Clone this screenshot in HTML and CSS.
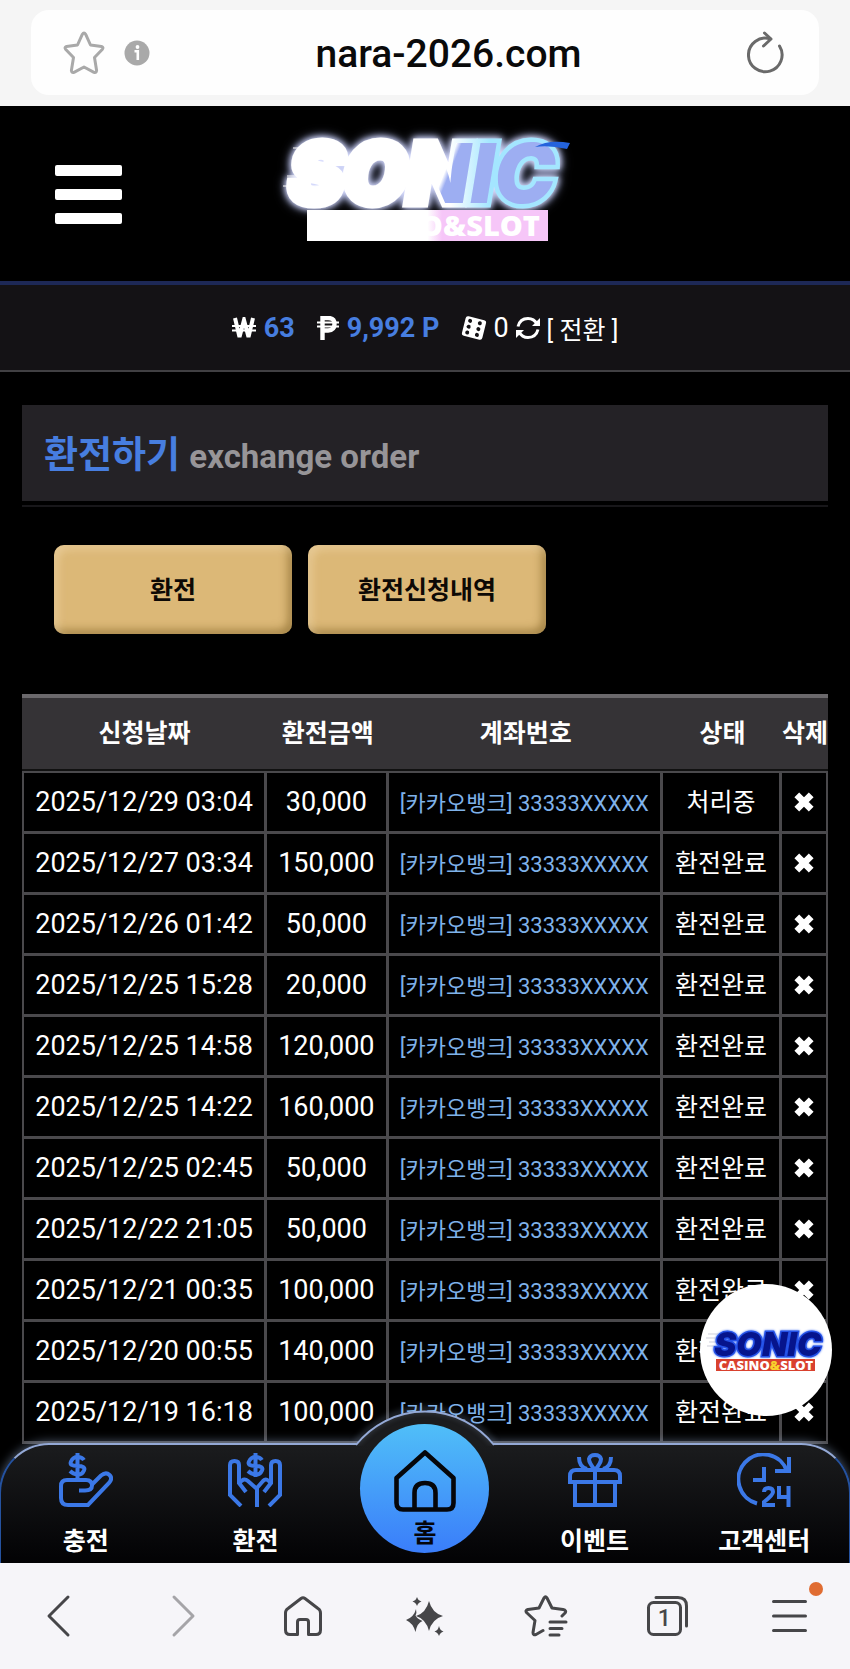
FILE: index.html
```html
<!DOCTYPE html>
<html lang="ko">
<head>
    <meta charset="UTF-8">
    <meta name="viewport" content="width=device-width, initial-scale=1.0">
    <title>환전하기</title>
    <link rel="stylesheet" href="styles.css">
</head>
<body>
    <svg class="sprite" aria-hidden="true">
        <symbol id="icon-x" viewBox="0 0 20 20">
            <path d="M4 4 L16 16 M16 4 L4 16" fill="none" stroke="currentColor" stroke-width="5.600"/>
        </symbol>
    </svg>

    <div class="browser">
        <div class="address-bar">
            <div class="address">
                <button class="icon-btn" aria-label="Bookmark">
                    <svg width="42" height="44" viewBox="0 0 42 44" fill="none" stroke="#a9a9a9" stroke-width="3" stroke-linejoin="round"><path d="M19.4 3.2Q21 .6 22.600 3.200L27.500 14L38.500 15.400Q41 16.300 39.200 18.500L31.500 26.500L33.600 39.500Q33.400 42.200 31 41.300L21 36L11 41.300Q8.600 42.200 8.400 39.500L10.500 26.500L2.800 18.500Q1 16.300 3.500 15.400L14.500 14Z"/></svg>
                </button>
                <button class="icon-btn" aria-label="Site info">
                    <svg width="26" height="26" viewBox="0 0 26 26"><circle cx="13" cy="13" r="12.500" fill="#a9a9a9"/><circle cx="13.500" cy="7" r="1.900" fill="#fff"/><path d="M10.500 11.200H13.800V20" fill="none" stroke="#fff" stroke-width="2.600"/></svg>
                </button>
                <span class="url">nara-2026.com</span>
                <button class="icon-btn" aria-label="Reload">
                    <svg width="38" height="44" viewBox="0 0 38 44" fill="none" stroke="#6a6a6a" stroke-width="3" stroke-linecap="round" stroke-linejoin="round"><path d="M32.500 15A16.800 16.800 0 1 1 23 7.800"/><path d="M17.500 2L24 8L16.500 15"/></svg>
                </button>
            </div>
        </div>

        <div class="site">
            <div class="site-scroll">
                <header class="site-header">
                    <button class="menu-btn" aria-label="메뉴"><span></span><span></span><span></span></button>
                    <a class="logo" href="#" aria-label="SONIC CASINO&amp;SLOT">
                        <svg width="320" height="128" viewBox="-10 -10 320 128">
                            <defs>
                                <linearGradient id="shine" x1="0" x2="1" y1="0" y2="0.150">
                                    <stop offset="0.640" stop-color="#fff"/>
                                    <stop offset="0.660" stop-color="#9daef2"/>
                                </linearGradient>
                                <linearGradient id="glow" x1="0" x2="1">
                                    <stop offset="0.600" stop-color="#fff"/>
                                    <stop offset="0.750" stop-color="#a4e6ff"/>
                                </linearGradient>
                                <linearGradient id="strip" x1="0" x2="1">
                                    <stop offset="0.500" stop-color="#fff"/>
                                    <stop offset="0.560" stop-color="#f6c6f8"/>
                                </linearGradient>
                            </defs>
                            <text class="logo-word glow" x="6" y="75" font-size="82" fill="url(#shine)" stroke="url(#glow)" stroke-width="9">SONIC</text>
                            <path d="M10 20H60M4 48H40M0 58H36" stroke="#fff" stroke-width="1"/>
                            <path d="M252 19Q266 11 287 15L284 21Q266 17 252 19Z" fill="#2463dc"/>
                            <rect x="24" y="82" width="241" height="31" fill="url(#strip)"/>
                            <text class="logo-tag" x="257" y="108" font-size="29" fill="#fff" text-anchor="end">CASINO&amp;SLOT</text>
                        </svg>
                    </a>
                </header>

                <div class="balance">
                    <span class="balance-item">
                        <svg width="24" height="22" viewBox="0 0 24 22" fill="none" stroke="#fff"><path d="M3 1L7.500 20L12 3L16.500 20L21 1" stroke-width="4"/><path d="M0 9H24M0 13.500H24" stroke-width="1.800"/></svg>
                        <b>63</b>
                    </span>
                    <span class="balance-item">
                        <svg width="22" height="24" viewBox="0 0 22 24" fill="none" stroke="#fff"><path d="M5.500 24V2H11Q17.500 2 17.500 8T11 14.500H5" stroke-width="4.400"/><path d="M0 6.500H22M0 10.500H22" stroke-width="2"/></svg>
                        <b>9,992 P</b>
                    </span>
                    <span class="balance-item casino">
                        <svg width="26" height="26" viewBox="0 0 26 26"><g transform="rotate(14 13 13)"><rect x="2.500" y="3" width="21" height="20" rx="2.500" fill="#fff"/><g fill="#141215"><circle cx="7.500" cy="7" r="2"/><circle cx="7.500" cy="13" r="2"/><circle cx="7.500" cy="19" r="2"/><circle cx="17.500" cy="7" r="2"/><circle cx="17.500" cy="13" r="2"/><circle cx="17.500" cy="19" r="2"/></g></g></svg>
                        <span>0</span>
                        <button class="swap-btn">
                            <svg width="26" height="26" viewBox="0 0 26 26" fill="none" stroke="#fff" stroke-width="3"><path d="M3 11.500Q5 3.500 13 3.500Q19 3.500 22 9M23 14.500Q21 22.500 13 22.500Q7 22.500 4 17"/><path d="M25 3V11H17ZM1 23V15H9Z" fill="#fff" stroke="none"/></svg>
                            <span>[ 전환 ]</span>
                        </button>
                    </span>
                </div>

                <main class="content">
                    <div class="title-wrap">
                        <h1 class="title">환전하기 <small>exchange order</small></h1>
                    </div>

                    <div class="tabs">
                        <button class="gold-btn">환전</button>
                        <button class="gold-btn">환전신청내역</button>
                    </div>

                    <table class="orders">
                        <colgroup>
                            <col class="col-date">
                            <col class="col-amount">
                            <col class="col-account">
                            <col class="col-status">
                            <col class="col-delete">
                        </colgroup>
                        <thead>
                            <tr><th>신청날짜</th><th>환전금액</th><th>계좌번호</th><th>상태</th><th>삭제</th></tr>
                        </thead>
                        <tbody>
                            <tr>
                                <td>2025/12/29 03:04</td><td>30,000</td><td class="account">[카카오뱅크] 33333XXXXX</td><td class="status">처리중</td>
                                <td><button class="delete-btn" aria-label="삭제"><svg width="24" height="24"><use href="#icon-x"/></svg></button></td>
                            </tr>
                            <tr>
                                <td>2025/12/27 03:34</td><td>150,000</td><td class="account">[카카오뱅크] 33333XXXXX</td><td class="status">환전완료</td>
                                <td><button class="delete-btn" aria-label="삭제"><svg width="24" height="24"><use href="#icon-x"/></svg></button></td>
                            </tr>
                            <tr>
                                <td>2025/12/26 01:42</td><td>50,000</td><td class="account">[카카오뱅크] 33333XXXXX</td><td class="status">환전완료</td>
                                <td><button class="delete-btn" aria-label="삭제"><svg width="24" height="24"><use href="#icon-x"/></svg></button></td>
                            </tr>
                            <tr>
                                <td>2025/12/25 15:28</td><td>20,000</td><td class="account">[카카오뱅크] 33333XXXXX</td><td class="status">환전완료</td>
                                <td><button class="delete-btn" aria-label="삭제"><svg width="24" height="24"><use href="#icon-x"/></svg></button></td>
                            </tr>
                            <tr>
                                <td>2025/12/25 14:58</td><td>120,000</td><td class="account">[카카오뱅크] 33333XXXXX</td><td class="status">환전완료</td>
                                <td><button class="delete-btn" aria-label="삭제"><svg width="24" height="24"><use href="#icon-x"/></svg></button></td>
                            </tr>
                            <tr>
                                <td>2025/12/25 14:22</td><td>160,000</td><td class="account">[카카오뱅크] 33333XXXXX</td><td class="status">환전완료</td>
                                <td><button class="delete-btn" aria-label="삭제"><svg width="24" height="24"><use href="#icon-x"/></svg></button></td>
                            </tr>
                            <tr>
                                <td>2025/12/25 02:45</td><td>50,000</td><td class="account">[카카오뱅크] 33333XXXXX</td><td class="status">환전완료</td>
                                <td><button class="delete-btn" aria-label="삭제"><svg width="24" height="24"><use href="#icon-x"/></svg></button></td>
                            </tr>
                            <tr>
                                <td>2025/12/22 21:05</td><td>50,000</td><td class="account">[카카오뱅크] 33333XXXXX</td><td class="status">환전완료</td>
                                <td><button class="delete-btn" aria-label="삭제"><svg width="24" height="24"><use href="#icon-x"/></svg></button></td>
                            </tr>
                            <tr>
                                <td>2025/12/21 00:35</td><td>100,000</td><td class="account">[카카오뱅크] 33333XXXXX</td><td class="status">환전완료</td>
                                <td><button class="delete-btn" aria-label="삭제"><svg width="24" height="24"><use href="#icon-x"/></svg></button></td>
                            </tr>
                            <tr>
                                <td>2025/12/20 00:55</td><td>140,000</td><td class="account">[카카오뱅크] 33333XXXXX</td><td class="status">환전완료</td>
                                <td><button class="delete-btn" aria-label="삭제"><svg width="24" height="24"><use href="#icon-x"/></svg></button></td>
                            </tr>
                            <tr>
                                <td>2025/12/19 16:18</td><td>100,000</td><td class="account">[카카오뱅크] 33333XXXXX</td><td class="status">환전완료</td>
                                <td><button class="delete-btn" aria-label="삭제"><svg width="24" height="24"><use href="#icon-x"/></svg></button></td>
                            </tr>
                        </tbody>
                    </table>
                </main>
            </div>

            <a class="float-badge" href="#" aria-label="SONIC CASINO&amp;SLOT">
                <svg width="132" height="132" viewBox="0 0 132 132">
                    <path d="M8 50H34M6 54H32M9 58H30M7 62H28" stroke="#b9bccb" stroke-width="0.700"/>
                    <text class="logo-word halo" x="68" y="72" font-size="33" text-anchor="middle" fill="#06148c" stroke="#2350e6" stroke-width="3">SONIC</text>
                    <rect x="16" y="75" width="99" height="12" fill="#d9412e"/>
                    <text class="logo-tag" x="66" y="86" font-size="13" text-anchor="middle" fill="#fff">CASINO<tspan fill="#f8d32c">&amp;</tspan>SLOT</text>
                </svg>
            </a>

            <nav class="bottom-nav">
                <svg class="nav-bump" width="160" height="46" viewBox="0 -8 160 46" aria-hidden="true">
                    <path d="M12 36A88 88 0 0 1 148 36V38H12Z" fill="#1b1c1e"/>
                    <path class="bump-line" d="M11 37A88 88 0 0 1 149 37" fill="none" stroke="#94a9d6" stroke-width="2"/>
                </svg>
                <a href="#">
                    <svg width="54" height="54" viewBox="0 0 54 54" fill="none" stroke="#3b78e7" stroke-width="4"><path d="M25 7Q23 4 18.500 4T12 8.500T18.500 13T25 17.500T18.500 21.500T11 18M18.500 0V26" /><path d="M20 37.500H26Q33 37.500 33 32.500Q33 27 27 27H8Q2 27 2 33V45Q2 52 9 52H29L50 30Q54 25.500 50.500 22T42 22.500L33 31.500"/></svg>
                    <span>충전</span>
                </a>
                <a href="#">
                    <svg width="54" height="54" viewBox="0 0 54 54" fill="none" stroke="#3b78e7" stroke-width="4"><path d="M34 7Q32 4 27.500 4T21 8.500T27.500 13T34 17.500T27.500 21.500T20 18M27.500 0V24"/><path d="M13 53L2 42V12Q2 8 6.500 8T11 12V30L18 39M11 31Q15 24 20 28L29 36V54M41 53L52 42V12Q52 8 47.500 8T43 12V30L36 39M43 31Q39 24 35 28L28 36"/></svg>
                    <span>환전</span>
                </a>
                <a class="home" href="#">
                    <svg width="62" height="62" viewBox="0 0 62 62" fill="none" stroke="#05060a" stroke-width="4.600" stroke-linejoin="round"><path d="M2.500 28L31 2.500L59.500 28V53Q59.500 59.500 53 59.500H9Q2.500 59.500 2.500 53ZM20.500 59V43Q20.500 33 31 33T41.500 43V59"/></svg>
                    <span>홈</span>
                </a>
                <a href="#">
                    <svg width="54" height="54" viewBox="0 0 54 54" fill="none" stroke="#3b78e7" stroke-width="4"><path d="M7 30V52H47V30M27 17V52M2 29V23Q2 17 8 17H46Q52 17 52 23V29ZM27 17Q21 10 21 6Q22 2 27 2T33 6Q33 10 27 17M19 16Q11 14 11 4M35 16Q43 14 43 4"/></svg>
                    <span>이벤트</span>
                </a>
                <a href="#">
                    <svg width="54" height="54" viewBox="0 0 54 54" fill="none" stroke="#3b78e7" stroke-width="4"><path d="M20 50.500A25 25 0 1 1 50 18M52 4V18H38M27 14V27H16"/><path d="M27 39Q27 35 31.500 35T36 39Q36 42 27 49V52H38M42 33V44H52M51.500 33V54"/></svg>
                    <span>고객센터</span>
                </a>
            </nav>
        </div>

        <div class="toolbar">
            <button class="icon-btn" aria-label="Back"><svg width="44" height="44" viewBox="0 0 44 44"><path d="M29 3L10 22L29 41"/></svg></button>
            <button class="icon-btn dim" aria-label="Forward"><svg width="44" height="44" viewBox="0 0 44 44"><path d="M14 3L33 22L14 41"/></svg></button>
            <button class="icon-btn" aria-label="Home"><svg width="44" height="44" viewBox="0 0 44 44"><path d="M19 4.500Q21 3 23 4.500L36 14.500Q38.500 16 38.500 19V36Q38.500 40.500 34 40.500H26.500V28Q26.500 25.500 24 25.500H18Q15.500 25.500 15.500 28V40.500H8Q3.500 40.500 3.500 36V19Q3.500 16 6 14.500Z"/></svg></button>
            <button class="icon-btn" aria-label="Assistant"><svg width="44" height="44" viewBox="0 0 44 44"><g fill="#464649" stroke="none"><path d="M26 7Q29 19 40 22Q29 25 26 37Q23 25 13 22Q23 19 26 7Z"/><path d="M13 15Q14 19 12.500 21.500Q14 24.500 19.500 27Q14 29 12.500 38Q10 29 3 26Q11 23 13 15Z"/><path d="M14 3Q15 6.500 18.500 7.500Q15 8.500 14 12Q13 8.500 9.500 7.500Q13 6.500 14 3Z"/><path d="M36 32Q37 36.500 40.500 37.500Q37 38.500 36 42Q35 38.500 31.500 37.500Q35 36.500 36 32Z"/></g></svg></button>
            <button class="icon-btn" aria-label="Bookmarks"><svg width="44" height="44" viewBox="0 0 44 44"><path d="M19 36.500L12 40.500Q9 41.500 9 38.500L11 26.500L2.500 18.500Q1 16.500 4 15.500L15 14L20 4Q21.500 1.500 23 4L28 14L39 15.500Q43 16.500 41 19L38 22M26 28H42M26 34.500H38M26 41H35"/></svg></button>
            <button class="icon-btn tab-count" aria-label="Tabs"><svg width="44" height="44" viewBox="0 0 44 44"><rect x="2.500" y="8.500" width="32" height="32" rx="5"/><path d="M10 3.500H32Q40.500 3.500 40.500 12V32"/></svg><span>1</span></button>
            <button class="icon-btn alert" aria-label="Menu"><svg width="44" height="44" viewBox="0 0 44 44"><path d="M6.500 7.500H38.500M6.500 22H38.500M6.500 36.500H38.500"/></svg></button>
        </div>
    </div>
</body>
</html>
```

FILE: styles.css
```css
:root {
    --blue: #477ee0;
    --gold: #dcb877;
    --line: #4a494c;
}

* {
    margin: 0;
    padding: 0;
    box-sizing: border-box;
}

body {
    font-family: Roboto, "Noto Sans CJK KR", sans-serif;
    background-color: #000;
    color: #fff;
}

button {
    background: none;
    border: none;
    color: inherit;
    font-family: inherit;
    cursor: pointer;
}

a {
    color: inherit;
    text-decoration: none;
}

svg {
    display: block;
    flex-shrink: 0;
}

.sprite {
    position: absolute;
    width: 0;
    height: 0;
}

.browser {
    display: flex;
    flex-direction: column;
    height: 100vh;
}

/* address bar */
.address-bar {
    background-color: #f5f5f5;
    padding: 10px 31px 11px;
}

.address {
    display: flex;
    align-items: center;
    height: 85px;
    padding: 0 34px 0 32px;
    background-color: #fefefe;
    border-radius: 18px;
}

.address .icon-btn + .icon-btn {
    margin-left: 19px;
}

.url {
    flex: 1;
    padding-top: 3px;
    text-align: center;
    color: #0a0a0a;
    font-size: 39px;
    font-weight: 500;
}

/* site */
.site {
    position: relative;
    flex: 1;
    min-height: 0;
    overflow: hidden;
}

.site-scroll {
    height: 100%;
    overflow-y: auto;
    scrollbar-width: none;
}

.site-header {
    display: grid;
    grid-template-columns: 1fr auto 1fr;
    align-items: center;
    height: 179px;
    padding: 2px 55px 0;
    border-bottom: 4px solid #1d2856;
}

.menu-btn {
    display: flex;
    flex-direction: column;
    gap: 13px;
    width: 67px;
}

.menu-btn span {
    height: 11px;
    background-color: #fff;
    border-radius: 2px;
}

.logo {
    margin: 0 0 25px 16px;
}

.logo-word {
    font-family: Inter, sans-serif;
    font-weight: 900;
    font-style: italic;
    paint-order: stroke;
}

.glow {
    filter: drop-shadow(0 0 3px #dfe2ff) drop-shadow(0 0 4px #a9b4e8);
}

.halo {
    filter: drop-shadow(0 0 1px #3c6cf5);
}

.logo-tag {
    font-family: "Open Sans", sans-serif;
    font-weight: 800;
}

.balance {
    display: flex;
    align-items: center;
    justify-content: center;
    gap: 22px;
    height: 87px;
    background-color: #141215;
    border-bottom: 2px solid #414043;
    font-size: 27px;
}

.balance-item {
    display: flex;
    align-items: center;
    gap: 8px;
}

.balance-item.casino {
    gap: 6px;
}

.balance b {
    color: var(--blue);
    font-weight: 700;
}

.swap-btn {
    display: flex;
    align-items: center;
    gap: 6px;
    font-size: 25px;
}

.content {
    padding: 33px 22px 120px;
}

.title-wrap {
    padding-bottom: 4px;
    border-bottom: 2px solid #18171a;
}

.title {
    height: 96px;
    padding: 0 22px;
    background-color: #242226;
    color: var(--blue);
    font-size: 37px;
    font-weight: 700;
    line-height: 102px;
}

.title small {
    color: #979598;
    font-size: 33px;
    font-weight: 700;
}

.tabs {
    display: flex;
    gap: 16px;
    padding: 38px 32px 60px;
}

.gold-btn {
    width: 238px;
    height: 89px;
    padding-bottom: 4px;
    background-color: var(--gold);
    border-radius: 10px;
    box-shadow: inset 4px 4px 8px rgba(255, 235, 200, 0.4), inset -4px -4px 8px rgba(110, 80, 20, 0.5);
    color: #0d0905;
    font-size: 25px;
    font-weight: 700;
}

/* order list */
.orders {
    width: 100%;
    table-layout: fixed;
    border-collapse: separate;
    border-spacing: 0;
    border-top: 4px solid #6b696c;
    text-align: center;
    white-space: nowrap;
}

.col-date { width: 30.4%; }
.col-amount { width: 15.1%; }
.col-account { width: 34%; }
.col-status { width: 14.8%; }
.col-delete { width: 5.7%; }

.orders th {
    height: 73px;
    padding-bottom: 6px;
    background-color: #353336;
    border-bottom: 2px solid #111;
    font-size: 25px;
    font-weight: 700;
}

.orders td {
    height: 61px;
    border-right: 3px solid var(--line);
    border-bottom: 3px solid var(--line);
    font-size: 27px;
}

.orders tbody tr:first-child td {
    height: 63px;
    border-top: 2px solid var(--line);
}

.orders td:first-child {
    border-left: 2px solid var(--line);
}

.orders td:last-child {
    border-right-width: 2px;
}

.orders td.account {
    padding-bottom: 2px;
    color: #7fb2ea;
    font-size: 22px;
}

.orders td.status {
    padding-bottom: 4px;
    font-size: 25px;
}

.delete-btn {
    display: block;
    margin: 0 auto;
}

/* badge floating over the list */
.float-badge {
    position: absolute;
    right: 18px;
    bottom: 147px;
    background-color: #fff;
    border-radius: 50%;
}

/* bottom navigation */
.bottom-nav {
    position: absolute;
    left: -1px;
    right: -1px;
    bottom: 0;
    display: grid;
    grid-template-columns: repeat(5, 1fr);
    height: 120px;
    background: linear-gradient(#1b1c1e, #020204);
    border: 2px solid #25529f;
    border-top-color: #94a9d6;
    border-bottom: none;
    border-radius: 50px 50px 0 0;
    box-shadow: 0 -2px 10px rgba(170, 195, 235, 0.4);
}

.nav-bump {
    position: absolute;
    top: -45px;
    left: 50%;
    transform: translateX(-50%);
}

.bump-line {
    filter: drop-shadow(0 -2px 3px rgba(170, 195, 235, 0.6));
}

.bottom-nav a {
    position: relative;
    display: flex;
    flex-direction: column;
    align-items: center;
    gap: 17px;
    padding-top: 8px;
    font-size: 25px;
    font-weight: 700;
    line-height: 36px;
}

.bottom-nav .home {
    justify-self: center;
    gap: 4px;
    width: 129px;
    height: 129px;
    margin-top: -21px;
    padding-top: 26px;
    background: linear-gradient(#50bff8, #3a7dfa);
    border-radius: 50%;
    color: #05060a;
}

/* browser toolbar */
.toolbar {
    display: grid;
    grid-template-columns: repeat(7, 1fr);
    place-items: center;
    height: 106px;
    background-color: #f6f5f9;
}

.toolbar .icon-btn {
    position: relative;
    color: #464649;
}

.toolbar svg {
    fill: none;
    stroke: #464649;
    stroke-width: 3;
    stroke-linecap: round;
    stroke-linejoin: round;
}

.toolbar .dim svg {
    stroke: #a5a4a8;
}

.tab-count span {
    position: absolute;
    left: 0;
    top: 8px;
    width: 37px;
    font-size: 23px;
    font-weight: 500;
    line-height: 33px;
    text-align: center;
}

.alert::after {
    content: "";
    position: absolute;
    top: -12px;
    right: -12px;
    width: 14px;
    height: 14px;
    background-color: #e06c32;
    border-radius: 50%;
}
```
